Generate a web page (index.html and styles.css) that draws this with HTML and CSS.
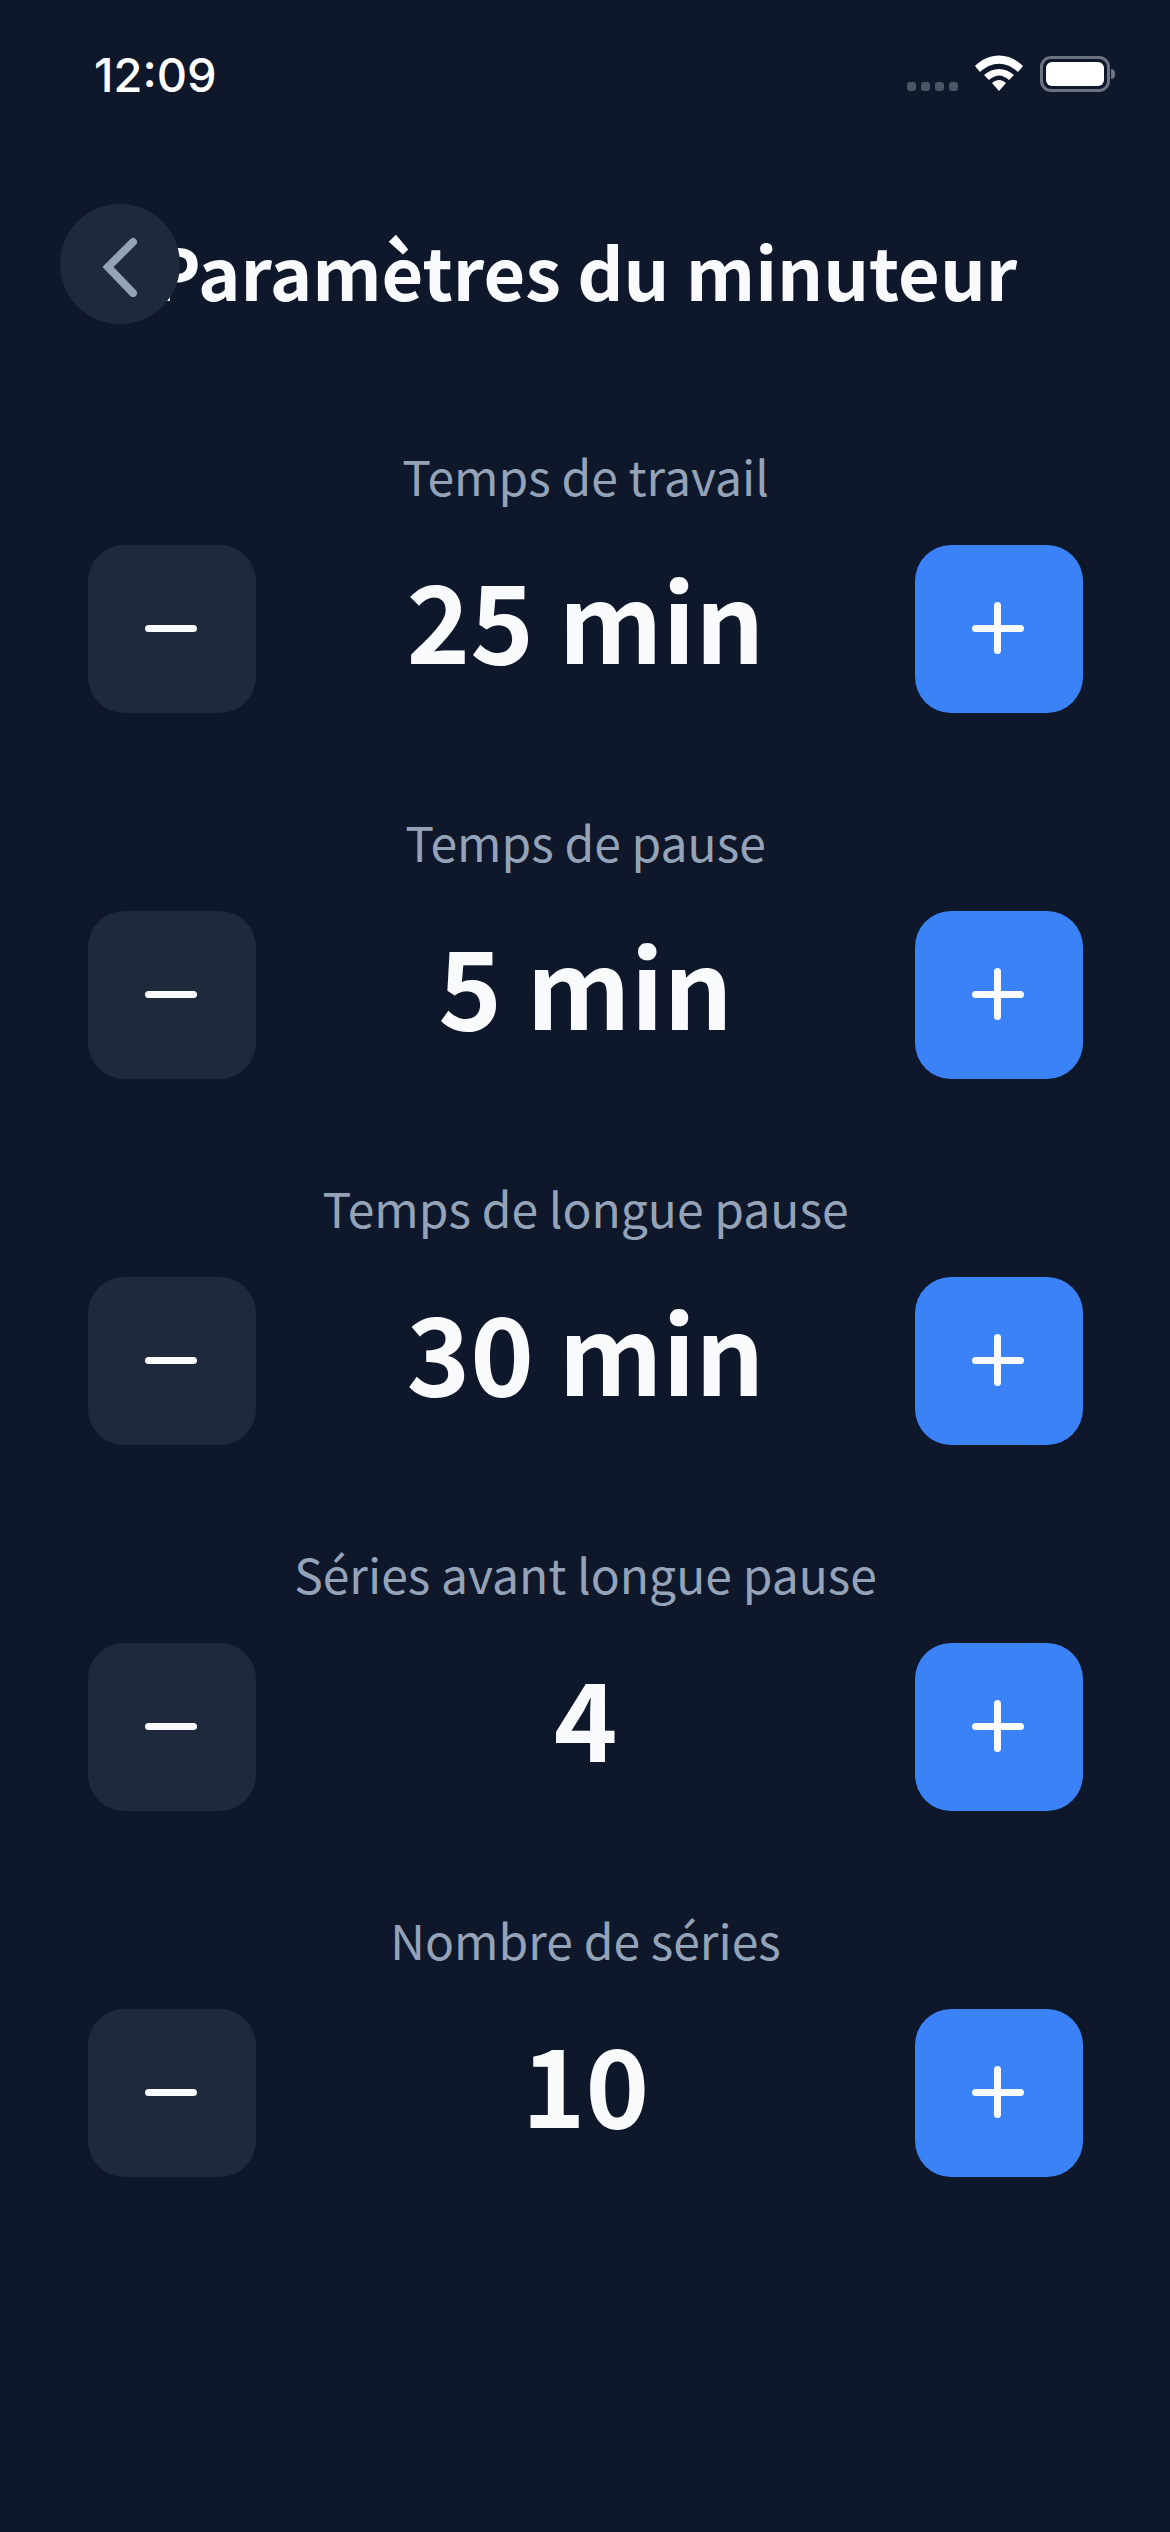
FILE: index.html
```html
<!DOCTYPE html>
<html lang="fr">
<head>
    <meta charset="UTF-8">
    <title>Paramètres du minuteur</title>
    <link rel="stylesheet" href="styles.css">
</head>
<body>
<div class="status">
    <span class="time">12:09</span>
    <div class="status-icons">
        <div class="signal"><i></i><i></i><i></i><i></i></div>
        <svg class="wifi" width="48" height="36" viewBox="1 1 48 36">
            <path d="M1 12 C15 -2 35 -2 49 12 L44 18 C32 7 18 7 6 18 Z" fill="#fff"/>
            <path d="M10 21 C19 13 31 13 40 21 L35 26 C28 20 22 20 15 26 Z" fill="#fff"/>
            <path d="M18 29 C23 25 27 25 32 29 L25 37 Z" fill="#fff"/>
        </svg>
        <div class="battery"><div class="battery-fill"></div></div>
    </div>
</div>

<div class="header">
    <a class="back">
        <svg width="36" height="60" viewBox="0 0 36 60"><path d="M31 5 L6 30 L31 56" fill="none" stroke="#94a3b8" stroke-width="8" stroke-linecap="round"/></svg>
    </a>
    <h1>Paramètres du minuteur</h1>
</div>

<div class="list">
    <div class="item">
        <div class="label">Temps de travail</div>
        <div class="row">
            <div class="btn minus"><em class="h"></em></div>
            <div class="value">25 min</div>
            <div class="btn plus"><em class="h"></em><em class="v"></em></div>
        </div>
    </div>
    <div class="item">
        <div class="label">Temps de pause</div>
        <div class="row">
            <div class="btn minus"><em class="h"></em></div>
            <div class="value">5 min</div>
            <div class="btn plus"><em class="h"></em><em class="v"></em></div>
        </div>
    </div>
    <div class="item">
        <div class="label">Temps de longue pause</div>
        <div class="row">
            <div class="btn minus"><em class="h"></em></div>
            <div class="value">30 min</div>
            <div class="btn plus"><em class="h"></em><em class="v"></em></div>
        </div>
    </div>
    <div class="item">
        <div class="label">Séries avant longue pause</div>
        <div class="row">
            <div class="btn minus"><em class="h"></em></div>
            <div class="value">4</div>
            <div class="btn plus"><em class="h"></em><em class="v"></em></div>
        </div>
    </div>
    <div class="item">
        <div class="label">Nombre de séries</div>
        <div class="row">
            <div class="btn minus"><em class="h"></em></div>
            <div class="value">10</div>
            <div class="btn plus"><em class="h"></em><em class="v"></em></div>
        </div>
    </div>
</div>
</body>
</html>
```

FILE: styles.css
```css
* {
    padding: 0;
    margin: 0;
    box-sizing: border-box;
}
html, body {
    height: 100%;
}
body {
    background: #0f172a;
    font-family: "Noto Sans CJK SC", "Noto Sans", sans-serif;
    color: #f8fafc;
}
.status {
    height: 204px;
    padding: 50px 55px 0 94px;
    display: flex;
    justify-content: space-between;
    align-items: flex-start;
}
.time {
    font-family: Inter, "Liberation Sans", sans-serif;
    font-size: 47px;
    line-height: 50px;
    font-weight: 500;
    color: #fff;
}
.status-icons {
    display: flex;
    align-items: flex-start;
    margin-top: 5px;
}
.signal {
    display: flex;
    gap: 5px;
    margin-top: 27px;
    margin-right: 17px;
}
.signal i {
    width: 9px;
    height: 9px;
    border-radius: 3px;
    background: #4b5563;
}
.wifi {
    margin-right: 17px;
}
.battery {
    position: relative;
    width: 70px;
    height: 36px;
    margin-top: 1px;
    margin-right: 5px;
    border: 3px solid #6b7280;
    border-radius: 11px;
    padding: 3px;
}
.battery:after {
    content: "";
    position: absolute;
    right: -8px;
    top: 10px;
    width: 4px;
    height: 10px;
    background: #6b7280;
    border-radius: 0 4px 4px 0;
}
.battery-fill {
    height: 100%;
    background: #fff;
    border-radius: 6px;
}
.header {
    position: relative;
    height: 120px;
    display: flex;
    justify-content: center;
    align-items: center;
}
.back {
    position: absolute;
    left: 60px;
    top: 0;
    width: 120px;
    height: 120px;
    border-radius: 50%;
    background: #1e293b;
    display: flex;
    align-items: center;
    justify-content: center;
}
.back svg {
    margin-top: 6px;
}
h1 {
    margin-top: 12px;
    font-size: 72px;
    line-height: 108px;
    font-weight: 700;
}
.list {
    margin-top: 118px;
    padding: 0 87px 0 88px;
}
.item {
    height: 366px;
}
.label {
    height: 103px;
    text-align: center;
    font-size: 48px;
    line-height: 66px;
    color: #94a3b8;
}
.row {
    display: flex;
    align-items: center;
    justify-content: space-between;
}
.btn {
    position: relative;
    width: 168px;
    height: 168px;
    border-radius: 36px;
    display: flex;
    align-items: center;
    justify-content: center;
}
.minus {
    background: #1e293b;
}
.plus {
    background: #3b82f6;
}
.btn em {
    position: absolute;
    margin: -2px 0 0 -2px;
    background: #f8fafc;
    border-radius: 4px;
}
.btn .h {
    width: 52px;
    height: 7px;
}
.btn .v {
    width: 7px;
    height: 52px;
}
.value {
    padding-bottom: 24px;
    font-size: 108px;
    line-height: 144px;
    font-weight: 700;
    text-align: center;
}
```
